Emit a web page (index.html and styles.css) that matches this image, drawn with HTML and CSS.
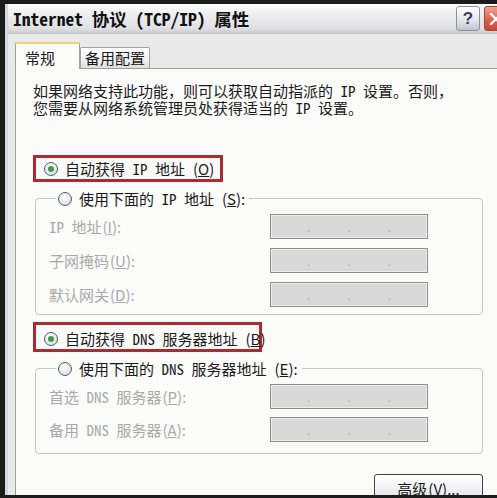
FILE: index.html
```html
<!DOCTYPE html>
<html lang="zh-CN">
  <head>
    <meta charset="UTF-8" />
    <meta name="viewport" content="width=device-width, initial-scale=1.0" />
    <title>Internet 协议 (TCP/IP) 属性</title>
    <link rel="stylesheet" href="styles.css">
  </head>
  <body>
    <div class="window">
      <!-- 标题栏 -->
      <div class="titlebar">
        <span class="title">Internet 协议 (TCP/IP) 属性</span>
        <span class="tb-btn help">?</span>
        <span class="tb-btn close">
          <svg width="14" height="14" viewBox="0 0 14 14">
            <path d="M2 2 L12 12 M12 2 L2 12" stroke="#fff" stroke-width="2.4" stroke-linecap="round" />
          </svg>
        </span>
      </div>

      <!-- 选项卡 -->
      <div class="tabs">
        <div class="tab active">常规</div>
        <div class="tab">备用配置</div>
      </div>

      <div class="panel">
        <div class="content">
          <p class="intro">如果网络支持此功能，则可以获取自动指派的 IP 设置。否则，<br />您需要从网络系统管理员处获得适当的 IP 设置。</p>

          <div class="mark mark-ip">
            <label class="opt"><span class="radio on"></span>自动获得 IP 地址<span class="key">(<u>O</u>)</span></label>
          </div>
          <fieldset class="group group-ip">
            <legend><label class="opt"><span class="radio"></span>使用下面的 IP 地址<span class="key">(<u>S</u>):</span></label></legend>
            <div class="fields">
              <span class="lbl">IP 地址<span class="key">(<u>I</u>):</span></span>
              <span class="ipbox"><i>.</i><i>.</i><i>.</i></span>
              <span class="lbl">子网掩码<span class="key">(<u>U</u>):</span></span>
              <span class="ipbox"><i>.</i><i>.</i><i>.</i></span>
              <span class="lbl">默认网关<span class="key">(<u>D</u>):</span></span>
              <span class="ipbox"><i>.</i><i>.</i><i>.</i></span>
            </div>
          </fieldset>

          <div class="mark mark-dns">
            <label class="opt"><span class="radio on"></span>自动获得 DNS 服务器地址<span class="key">(<u>B</u>)</span></label>
          </div>
          <fieldset class="group group-dns">
            <legend><label class="opt"><span class="radio"></span>使用下面的 DNS 服务器地址<span class="key">(<u>E</u>):</span></label></legend>
            <div class="fields">
              <span class="lbl">首选 DNS 服务器<span class="key">(<u>P</u>):</span></span>
              <span class="ipbox"><i>.</i><i>.</i><i>.</i></span>
              <span class="lbl">备用 DNS 服务器<span class="key">(<u>A</u>):</span></span>
              <span class="ipbox"><i>.</i><i>.</i><i>.</i></span>
            </div>
          </fieldset>

          <div class="actions">
            <span class="btn">高级<span class="key">(<u>V</u>)...</span></span>
          </div>
        </div>
      </div>
    </div>
  </body>
</html>
```

FILE: styles.css
```css
html,
body {
  margin: 0;
  height: 498px;
  overflow: hidden;
}
body {
  background: #1b1b1b;
  padding: 4px 0 0 5px;
  box-sizing: border-box;
  font-family: "Noto Sans Mono CJK SC", "Noto Sans CJK SC", monospace;
  font-size: 15px;
  color: #1a1a1a;
}
.window {
  width: 510px;
  height: 491px;
  overflow: hidden;
  background: #e9e9e9;
  border-left: 3px solid #d5d8df;
  box-sizing: border-box;
}

/* 标题栏 */
.titlebar {
  height: 30px;
  display: flex;
  align-items: center;
  padding: 0 7px 0 5px;
  background: linear-gradient(#fbfbfb, #ededef 40%, #e0e0e4 85%, #cbcbd0);
  border-bottom: 1px solid #c2c2c6;
  box-sizing: border-box;
}
.title {
  flex: 1;
  font-weight: bold;
  font-size: 17.5px;
  line-height: 30px;
  color: #111;
  white-space: nowrap;
}
.tb-btn {
  width: 24px;
  height: 25px;
  box-sizing: border-box;
  border-radius: 3px;
  display: flex;
  align-items: center;
  justify-content: center;
  margin-left: 4px;
}
.help {
  border: 1px solid #8d8f9c;
  background: linear-gradient(#ffffff, #e4e5ea 60%, #c3c5cf);
  color: #34406a;
  font-weight: bold;
  font-size: 17px;
  font-family: "Liberation Sans", sans-serif;
}
.close {
  border: 1px solid #a1463b;
  background: linear-gradient(#f1a493, #d9634f 55%, #c24a38);
}

/* 选项卡 */
.tabs {
  height: 34px;
  display: flex;
  align-items: flex-end;
  padding-left: 7px;
  box-sizing: border-box;
}
.tab {
  height: 21px;
  line-height: 20px;
  padding: 0 4px;
  width: 70px;
  box-sizing: border-box;
  text-align: center;
  border: 1px solid #a2a2a2;
  border-bottom: none;
  border-radius: 2px 2px 0 0;
  background: linear-gradient(#ffffff, #f0f0f0 60%, #dedede);
}
.tab.active {
  width: 65px;
  height: 27px;
  line-height: 27px;
  margin-bottom: -1px;
  position: relative;
  z-index: 1;
  background: #fbfbfa;
  border-top: 2px solid #f1cf75;
  text-align: left;
  padding-left: 9px;
}

/* 面板 */
.panel {
  margin-left: 7px;
  height: 430px;
  background: #fbfbfa;
  border-top: 1px solid #9d9d9d;
  border-left: 1px solid #9d9d9d;
  padding: 13px 0 0 17px;
  box-sizing: border-box;
}
.content {
  width: 450px;
}
.intro {
  margin: 0;
  line-height: 17px;
  white-space: nowrap;
}
.key {
  font-family: "Noto Sans CJK SC", sans-serif;
  margin-left: 1px;
}

/* 单选项 */
.opt {
  display: flex;
  align-items: center;
  gap: 7px;
  line-height: 21px;
  white-space: nowrap;
}
.radio {
  width: 14px;
  height: 14px;
  flex: none;
  box-sizing: border-box;
  border-radius: 50%;
  border: 1px solid #4f5c72;
  background: radial-gradient(circle at 40% 35%, #ffffff, #e4e6ea 60%, #cdd0d6);
  display: flex;
  align-items: center;
  justify-content: center;
}
.radio.on::after {
  content: "";
  width: 6px;
  height: 6px;
  border-radius: 50%;
  background: #3f9b45;
}

/* 红色标记框 */
.mark {
  border: 3px solid #ad2a30;
  box-sizing: border-box;
  padding-left: 8px;
}
.mark-ip {
  width: 190px;
  margin-top: 39px;
}
.mark-dns {
  width: 229px;
  margin-top: 7px;
  padding-top: 3px;
}

/* 分组框 */
.group {
  margin: 6px 0 0 2px;
  width: 448px;
  min-inline-size: 0;
  box-sizing: border-box;
  border: 1px solid #c6c6c6;
  border-radius: 4px;
  padding: 5px 0 7px 13px;
}
.group legend {
  margin-left: 7px;
  padding: 0 4px 0 2px;
}
.group-dns {
  padding-top: 5px;
  padding-bottom: 11px;
}
.fields {
  display: grid;
  grid-template-columns: 221px 158px;
  row-gap: 9px;
  align-items: center;
}
.group-dns .fields {
  row-gap: 8px;
}
.lbl {
  color: #a9a9a9;
  white-space: nowrap;
}
.ipbox {
  height: 25px;
  box-sizing: border-box;
  border: 1px solid #8e8e8e;
  box-shadow: inset 0 0 0 1px #ececec;
  background: #d9d9d9;
  display: flex;
  justify-content: space-evenly;
  align-items: center;
}
.ipbox i {
  font-style: normal;
  color: #b4b4b4;
  font-size: 12px;
  line-height: 12px;
}

/* 按钮 */
.actions {
  display: flex;
  justify-content: flex-end;
  margin-top: 20px;
}
.btn {
  width: 109px;
  height: 30px;
  box-sizing: border-box;
  border: 1px solid #3f4148;
  border-radius: 3px;
  background: linear-gradient(#ffffff, #f1f1f4 50%, #dcdde6);
  text-align: center;
  line-height: 28px;
  white-space: nowrap;
}
```
